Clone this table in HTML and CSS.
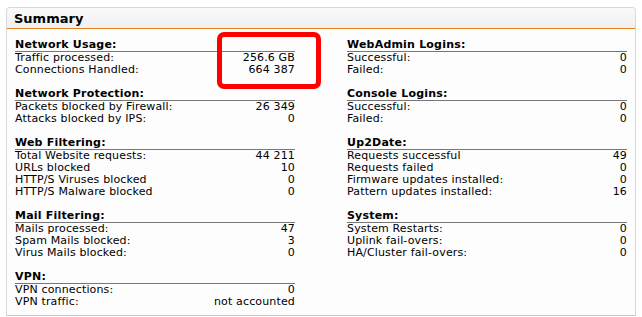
FILE: index.html
```html
<!DOCTYPE html>
<html lang="en">
<head>
    <meta charset="UTF-8">
    <title>Summary</title>
    <link rel="stylesheet" href="styles.css">
</head>
<body>
    <div class="panel">
        <div class="panel-header">Summary</div>
        <div class="panel-body">
            <div class="column">
                <div class="section">
                    <div class="section-title">Network Usage:</div>
                    <div class="row"><span>Traffic processed:</span><span>256.6 GB</span></div>
                    <div class="row"><span>Connections Handled:</span><span>664 387</span></div>
                </div>
                <div class="section">
                    <div class="section-title">Network Protection:</div>
                    <div class="row"><span>Packets blocked by Firewall:</span><span>26 349</span></div>
                    <div class="row"><span>Attacks blocked by IPS:</span><span>0</span></div>
                </div>
                <div class="section">
                    <div class="section-title">Web Filtering:</div>
                    <div class="row"><span>Total Website requests:</span><span>44 211</span></div>
                    <div class="row"><span>URLs blocked</span><span>10</span></div>
                    <div class="row"><span>HTTP/S Viruses blocked</span><span>0</span></div>
                    <div class="row"><span>HTTP/S Malware blocked</span><span>0</span></div>
                </div>
                <div class="section">
                    <div class="section-title">Mail Filtering:</div>
                    <div class="row"><span>Mails processed:</span><span>47</span></div>
                    <div class="row"><span>Spam Mails blocked:</span><span>3</span></div>
                    <div class="row"><span>Virus Mails blocked:</span><span>0</span></div>
                </div>
                <div class="section">
                    <div class="section-title">VPN:</div>
                    <div class="row"><span>VPN connections:</span><span>0</span></div>
                    <div class="row"><span>VPN traffic:</span><span>not accounted</span></div>
                </div>
            </div>
            <div class="column">
                <div class="section">
                    <div class="section-title">WebAdmin Logins:</div>
                    <div class="row"><span>Successful:</span><span>0</span></div>
                    <div class="row"><span>Failed:</span><span>0</span></div>
                </div>
                <div class="section">
                    <div class="section-title">Console Logins:</div>
                    <div class="row"><span>Successful:</span><span>0</span></div>
                    <div class="row"><span>Failed:</span><span>0</span></div>
                </div>
                <div class="section">
                    <div class="section-title">Up2Date:</div>
                    <div class="row"><span>Requests successful</span><span>49</span></div>
                    <div class="row"><span>Requests failed</span><span>0</span></div>
                    <div class="row"><span>Firmware updates installed:</span><span>0</span></div>
                    <div class="row"><span>Pattern updates installed:</span><span>16</span></div>
                </div>
                <div class="section">
                    <div class="section-title">System:</div>
                    <div class="row"><span>System Restarts:</span><span>0</span></div>
                    <div class="row"><span>Uplink fail-overs:</span><span>0</span></div>
                    <div class="row"><span>HA/Cluster fail-overs:</span><span>0</span></div>
                </div>
            </div>
        </div>
        <!-- red marker around the traffic numbers -->
        <div class="highlight"></div>
    </div>
</body>
</html>
```

FILE: styles.css
```css
body {
    margin: 0;
    background: #fff;
    font-family: "DejaVu Sans", Verdana, sans-serif;
    color: #000;
}
.panel {
    position: relative;
    width: 630px;
    margin: 7px 0 0 6px;
    box-sizing: border-box;
    border: 1px solid #d8d8d8;
    border-bottom-color: #c8c8c8;
    border-radius: 4px 4px 0 0;
    background: #fdfdfd;
}
.panel-header {
    height: 21px;
    padding: 1px 7px 0;
    box-sizing: border-box;
    line-height: 20px;
    font-size: 13px;
    font-weight: bold;
    background: linear-gradient(#fafafa, #f0f0f0);
    border-bottom: 1px solid #e5841f;
    border-radius: 4px 4px 0 0;
}
.panel-body {
    display: flex;
    gap: 52px;
    padding: 9px 8px 7px;
}
.column {
    width: 280px;
}
.section {
    margin-bottom: 11px;
}
.section:last-child {
    margin-bottom: 0;
}
.section-title {
    font-size: 11px;
    font-weight: bold;
    line-height: 13px;
    letter-spacing: 0.2px;
    border-bottom: 1px solid #777;
}
.row {
    display: flex;
    justify-content: space-between;
    font-size: 11px;
    line-height: 12px;
    letter-spacing: 0.15px;
}
.highlight {
    position: absolute;
    left: 210px;
    top: 24px;
    width: 104px;
    height: 57px;
    box-sizing: border-box;
    border: 5px solid #f00;
    border-radius: 7px;
}
```
